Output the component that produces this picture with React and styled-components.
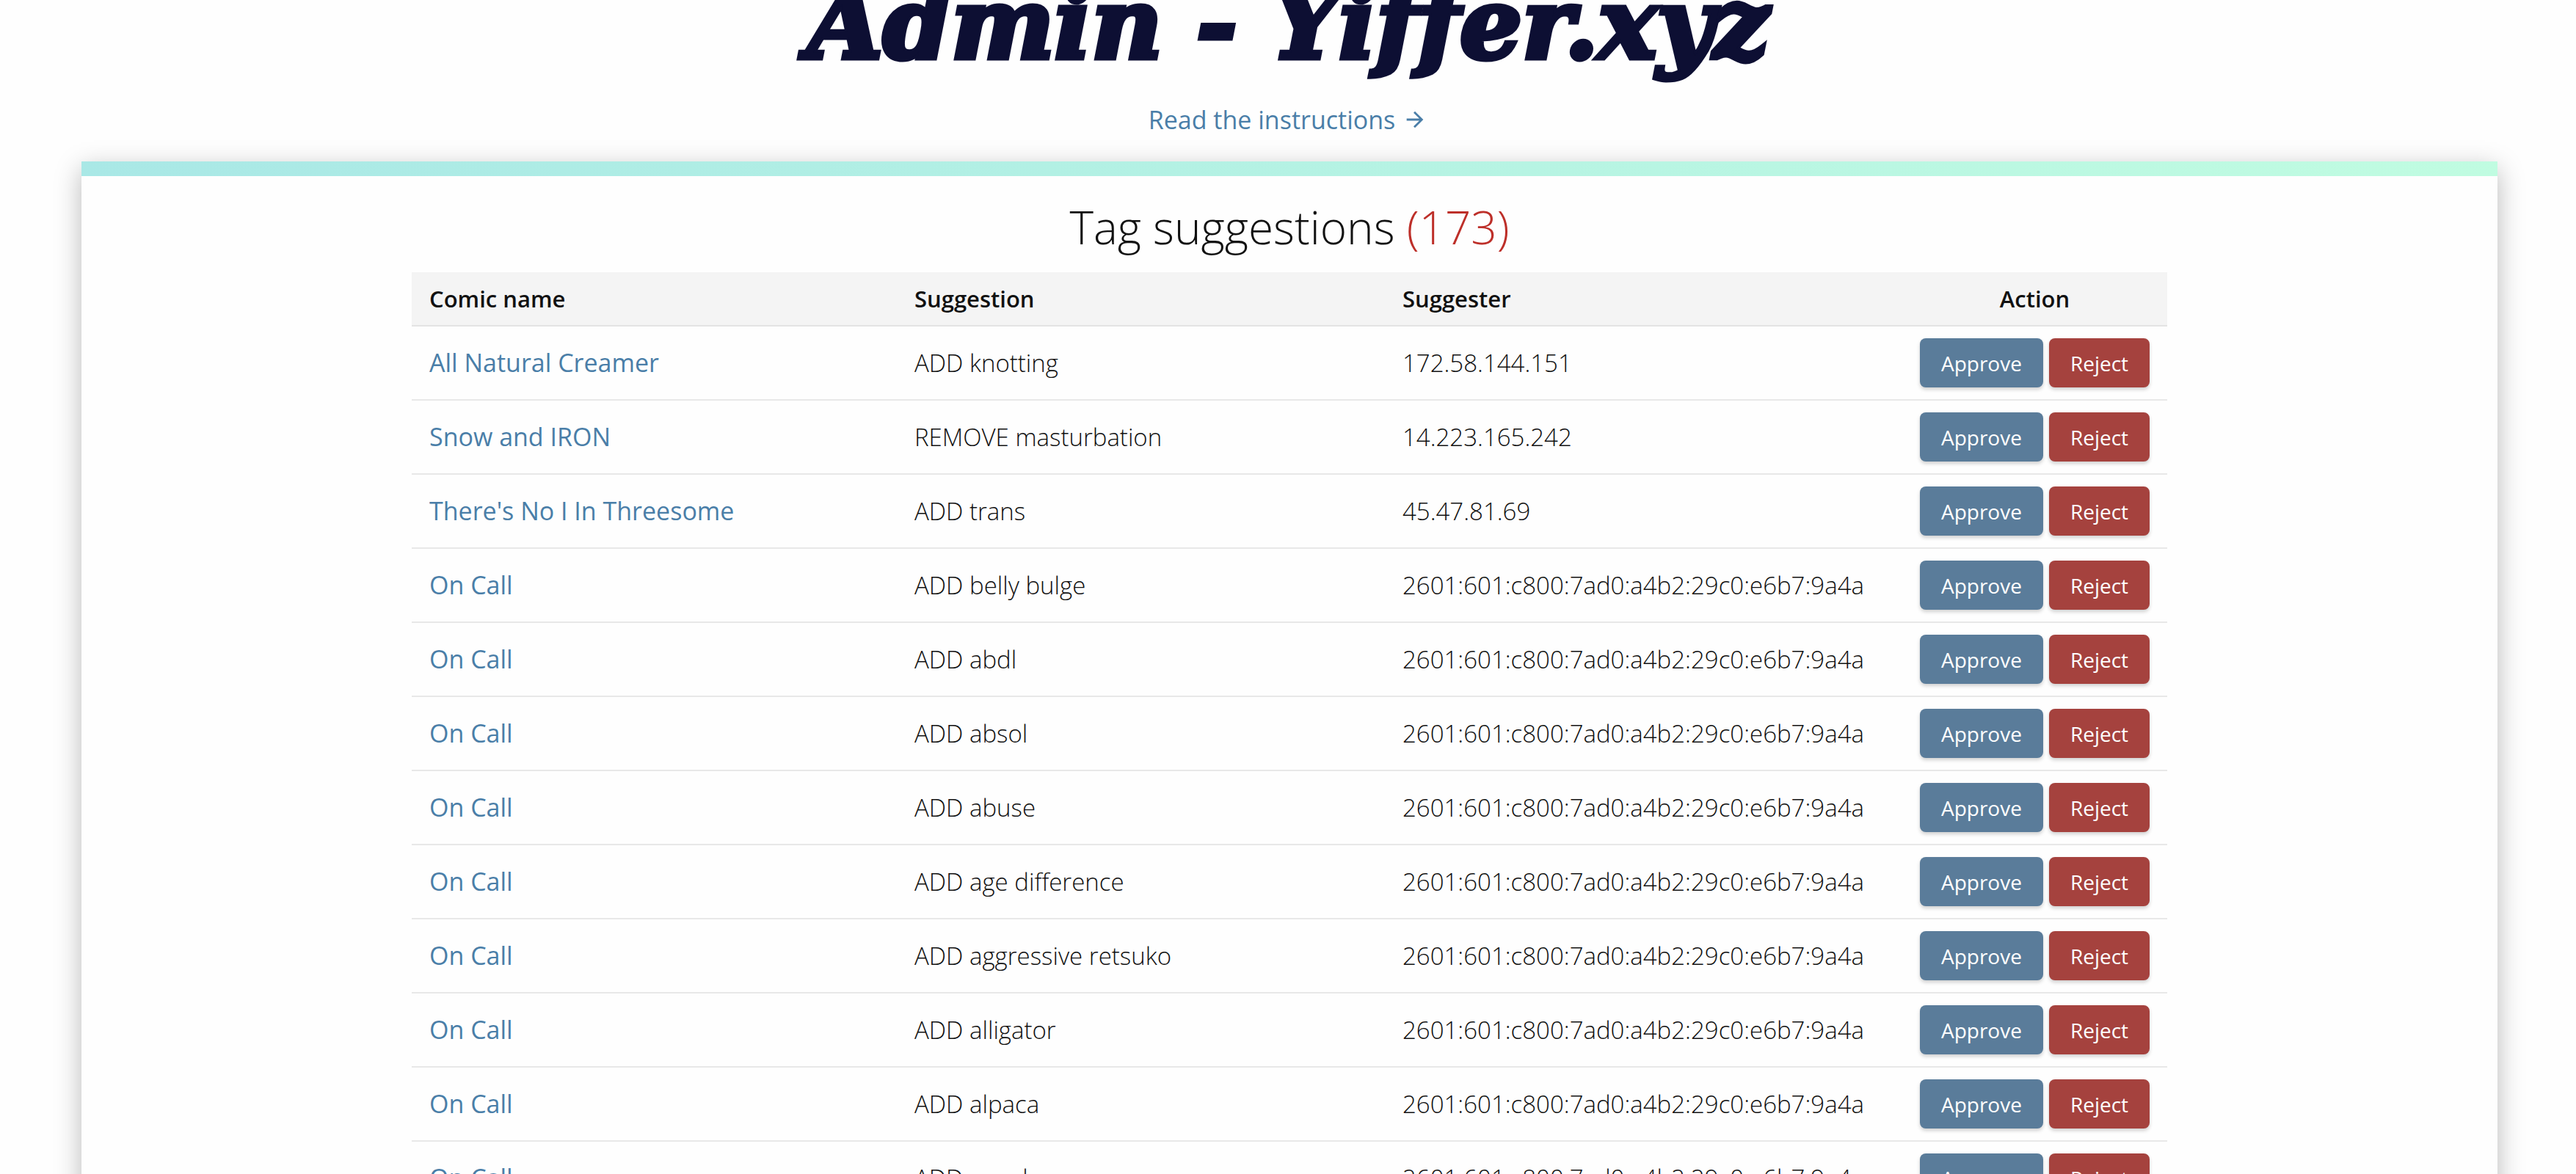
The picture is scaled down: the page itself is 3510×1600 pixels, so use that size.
import React from "react";
import styled, { createGlobalStyle } from "styled-components";
import { MdArrowForward } from "react-icons/md";

const GlobalStyle = createGlobalStyle`
  *, *::before, *::after { box-sizing: border-box; }
  body {
    margin: 0;
    background: #fefefe;
    color: #111;
    font-family: "Open Sans", "Noto Sans", sans-serif;
    font-weight: 340;
    font-size: 33px;
  }
`;

const Page = styled.div`
  display: flex;
  flex-direction: column;
  overflow: hidden;
`;

const PageTitle = styled.h1`
  margin: -28px 0 49px;
  text-align: center;
  font-family: "DejaVu Serif", serif;
  font-style: italic;
  font-weight: 700;
  font-size: 133px;
  line-height: 120px;
  color: #0d0f33;
  -webkit-text-stroke: 7px #0d0f33;
  paint-order: stroke fill;
  font-variant-ligatures: none;
`;

const TextLink = styled.a`
  color: #4a7ea8;
  font-size: 34px;
  font-weight: 400;
  line-height: 44px;
  text-decoration: none;
`;

const InstructionsLink = styled(TextLink)`
  display: flex;
  align-items: center;
  align-self: center;
  gap: 10px;
`;

const Card = styled.main`
  display: flex;
  flex-direction: column;
  align-items: center;
  margin: 35px 107px 60px 111px;
  padding-bottom: 60px;
  background: #fefefe;
  box-shadow: 0 10px 34px rgba(0, 0, 0, 0.28);

  &::before {
    content: "";
    align-self: stretch;
    height: 20px;
    background: linear-gradient(to right, #a9e8e6, #c0fce1);
  }
`;

const SectionTitle = styled.h2`
  margin: 27px 0 20px;
  font-size: 62px;
  font-weight: 300;
  line-height: 84px;
`;

const Count = styled.span`
  color: #bd2f29;
`;

const Table = styled.table`
  width: 100%;
  max-width: 2392px;
  table-layout: fixed;
  border-collapse: separate;
  border-spacing: 0;
`;

const Column = styled.col`
  width: ${(p) => p.$width};
`;

const HeadCell = styled.th`
  height: 74px;
  padding: 0 24px;
  background: #f4f4f4;
  border-bottom: 2px solid #e3e3e3;
  font-size: 31px;
  font-weight: 600;
  text-align: ${(p) => p.$align || "left"};
`;

const Cell = styled.td`
  padding: 16px 24px;
  border-bottom: 2px solid #e8e8e8;
  line-height: 44px;
  white-space: nowrap;
`;

const Actions = styled.div`
  display: flex;
  justify-content: center;
  gap: 8px;
`;

const Button = styled.button`
  height: 67px;
  padding: 0 29px;
  border: 0;
  border-radius: 8px;
  background: ${(p) => (p.$danger ? "#a5423e" : "#5a7c9a")};
  box-shadow: 0 3px 5px rgba(0, 0, 0, 0.18);
  color: #fff;
  font-family: inherit;
  font-size: 28px;
  font-weight: 500;
  cursor: pointer;
`;

const longAddress = "2601:601:c800:7ad0:a4b2:29c0:e6b7:9a4a";

const suggestions = [
  ["All Natural Creamer", "ADD knotting", "172.58.144.151"],
  ["Snow and IRON", "REMOVE masturbation", "14.223.165.242"],
  ["There's No I In Threesome", "ADD trans", "45.47.81.69"],
  ["On Call", "ADD belly bulge", longAddress],
  ["On Call", "ADD abdl", longAddress],
  ["On Call", "ADD absol", longAddress],
  ["On Call", "ADD abuse", longAddress],
  ["On Call", "ADD age difference", longAddress],
  ["On Call", "ADD aggressive retsuko", longAddress],
  ["On Call", "ADD alligator", longAddress],
  ["On Call", "ADD alpaca", longAddress],
  ["On Call", "ADD angel", longAddress],
];

function SuggestionRow({ comic, suggestion, suggester }) {
  return (
    <tr>
      <Cell>
        <TextLink href="#comic">{comic}</TextLink>
      </Cell>
      <Cell>{suggestion}</Cell>
      <Cell>{suggester}</Cell>
      <Cell>
        <Actions>
          <Button type="button">Approve</Button>
          <Button type="button" $danger>
            Reject
          </Button>
        </Actions>
      </Cell>
    </tr>
  );
}

export default function App() {
  return (
    <>
      <GlobalStyle />
      <Page>
        <PageTitle>Admin - Yiffer.xyz</PageTitle>
        <InstructionsLink href="#instructions">
          Read the instructions
          <MdArrowForward size={34} aria-hidden="true" />
        </InstructionsLink>
        <Card>
          <SectionTitle>
            Tag suggestions <Count>(173)</Count>
          </SectionTitle>
          <Table>
            <colgroup>
              <Column $width="661px" />
              <Column $width="665px" />
              <Column $width="705px" />
              <Column $width="auto" />
            </colgroup>
            <thead>
              <tr>
                <HeadCell scope="col">Comic name</HeadCell>
                <HeadCell scope="col">Suggestion</HeadCell>
                <HeadCell scope="col">Suggester</HeadCell>
                <HeadCell scope="col" $align="center">
                  Action
                </HeadCell>
              </tr>
            </thead>
            <tbody>
              {suggestions.map(([comic, suggestion, suggester]) => (
                <SuggestionRow
                  key={comic + suggestion}
                  comic={comic}
                  suggestion={suggestion}
                  suggester={suggester}
                />
              ))}
            </tbody>
          </Table>
        </Card>
      </Page>
    </>
  );
}
